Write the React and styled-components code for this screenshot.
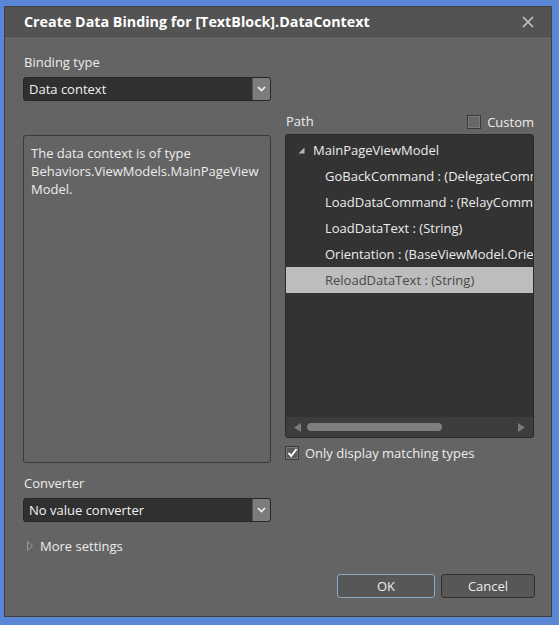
import React from "react";
import styled, { createGlobalStyle } from "styled-components";

const Global = createGlobalStyle`
  html, body { margin: 0; padding: 0; }
  body {
    background: #5b86d5;
    font-family: "Open Sans", "Noto Sans", sans-serif;
    font-size: 13px;
    color: #ececec;
    height: 625px;
    overflow: hidden;
  }
  #root { padding: 6px 7px 8px 4px; }
`;

const Window = styled.div`
  width: 548px;
  height: 611px;
  box-sizing: border-box;
  border: 1px solid #404040;
  background: #646464;
  display: flex;
  flex-direction: column;
`;

const TitleBar = styled.div`
  height: 30px;
  flex: none;
  background: #535353;
  border-bottom: 1px solid #4c4c4c;
  display: flex;
  align-items: center;
  justify-content: space-between;
  padding: 0 16px 0 19px;
  box-sizing: border-box;
`;

const Title = styled.div`
  font-weight: 700;
  font-size: 14.3px;
  color: #ffffff;
`;

const CloseBtn = styled.div`
  width: 14px;
  height: 14px;
  display: flex;
  align-items: center;
  justify-content: center;
`;

const Content = styled.div`
  flex: 1;
  padding: 16px 16px 18px 18px;
  display: flex;
  flex-direction: column;
`;

const Grid = styled.div`
  display: grid;
  grid-template-columns: 248px 249px;
  column-gap: 14px;
`;

const Field = styled.div`
  display: flex;
  flex-direction: column;
  gap: 5px;
`;

const Label = styled.div`
  height: 19px;
  line-height: 19px;
  padding-left: 1px;
  color: #ececec;
`;

const Select = styled.div`
  height: 24px;
  box-sizing: border-box;
  border: 1px solid #262626;
  border-radius: 3px;
  background: #303030;
  display: flex;
  align-items: stretch;
  overflow: hidden;
`;

const SelectText = styled.div`
  flex: 1;
  padding-left: 5px;
  line-height: 22px;
  color: #f0f0f0;
`;

const SelectArrow = styled.div`
  width: 17px;
  background: #7c7c7c;
  display: flex;
  align-items: center;
  justify-content: center;
  border-left: 1px solid #555;
`;

const PathHeader = styled.div`
  margin-top: 11px;
  height: 19px;
  display: flex;
  align-items: center;
  justify-content: space-between;
  grid-column: 2;
`;

const CheckWrap = styled.div`
  display: flex;
  align-items: center;
  gap: 6px;
`;

const Box = styled.div`
  width: 14px;
  height: 14px;
  box-sizing: border-box;
  border: 1px solid #3a3a3a;
  background: ${(p) => (p.checked ? "#5a5a5a" : "#676767")};
  display: flex;
  align-items: center;
  justify-content: center;
  box-shadow: inset 0 0 0 1px #7a7a7a;
`;

const Desc = styled.div`
  margin-top: 4px;
  height: 328px;
  box-sizing: border-box;
  border: 1px solid #3a3a3a;
  border-radius: 3px;
  padding: 8px 7px;
  line-height: 18px;
  color: #ececec;
`;

const RightCol = styled.div`
  margin-top: 3px;
  display: flex;
  flex-direction: column;
`;

const Tree = styled.div`
  height: 304px;
  box-sizing: border-box;
  border: 1px solid #2a2a2a;
  border-radius: 3px;
  background: #333333;
  display: flex;
  flex-direction: column;
  overflow: hidden;
`;

const TreeBody = styled.div`
  flex: 1;
  padding-top: 2px;
  overflow: hidden;
`;

const Row = styled.div`
  height: 26px;
  display: flex;
  align-items: center;
  padding-left: ${(p) => p.indent}px;
  white-space: nowrap;
  overflow: hidden;
  background: ${(p) => (p.selected ? "#bdbdbd" : "transparent")};
  color: ${(p) => (p.selected ? "#484848" : "#ececec")};
`;

const Expander = styled.span`
  width: 15px;
  display: inline-flex;
  align-items: center;
`;

const HScroll = styled.div`
  height: 20px;
  flex: none;
  background: #3d3d3d;
  display: flex;
  align-items: center;
  padding: 0 8px;
  gap: 6px;
`;

const Track = styled.div`
  flex: 1;
  height: 8px;
`;

const Thumb = styled.div`
  height: 8px;
  border-radius: 4px;
  background: #7f7f7f;
`;

const CheckRow = styled.div`
  margin-top: 7px;
  height: 16px;
  display: flex;
  align-items: center;
  gap: 6px;
`;

const ConverterField = styled(Field)`
  margin-top: 11px;
`;

const More = styled.div`
  margin-top: 14px;
  height: 20px;
  display: flex;
  align-items: center;
  gap: 7px;
  padding-left: 4px;
`;

const Footer = styled.div`
  margin-top: auto;
  display: flex;
  justify-content: flex-end;
  gap: 6px;
`;

const Button = styled.div`
  width: ${(p) => p.w}px;
  height: 24px;
  box-sizing: border-box;
  border: 1px solid ${(p) => (p.primary ? "#8aa9c6" : "#2f2f2f")};
  border-radius: 3px;
  background: #575757;
  display: flex;
  align-items: center;
  justify-content: center;
  color: #eeeeee;
`;

const Chevron = () => (
  <svg width="9" height="6" viewBox="0 0 9 6">
    <path d="M1 1 L4.5 4.5 L8 1" fill="none" stroke="#f2f2f2" strokeWidth="1.6" />
  </svg>
);

const Dropdown = ({ value }) => (
  <Select>
    <SelectText>{value}</SelectText>
    <SelectArrow>
      <Chevron />
    </SelectArrow>
  </Select>
);

const rows = [
  "GoBackCommand : (DelegateCommand)",
  "LoadDataCommand : (RelayCommand)",
  "LoadDataText : (String)",
  "Orientation : (BaseViewModel.Orientation)",
  "ReloadDataText : (String)",
];

export default function App() {
  return (
    <>
      <Global />
      <Window>
        <TitleBar>
          <Title>Create Data Binding for [TextBlock].DataContext</Title>
          <CloseBtn>
            <svg width="12" height="12" viewBox="0 0 12 12">
              <path d="M1 1 L11 11 M11 1 L1 11" stroke="#c8c8c8" strokeWidth="1.6" />
            </svg>
          </CloseBtn>
        </TitleBar>
        <Content>
          <Grid>
            <Field>
              <Label>Binding type</Label>
              <Dropdown value="Data context" />
            </Field>
            <div />
            <div />
            <PathHeader>
              <Label>Path</Label>
              <CheckWrap>
                <Box />
                <span>Custom</span>
              </CheckWrap>
            </PathHeader>
            <Desc>
              The data context is of type
              <br />
              Behaviors.ViewModels.MainPageView
              <br />
              Model.
            </Desc>
            <RightCol>
              <Tree>
                <TreeBody>
                  <Row indent={12}>
                    <Expander>
                      <svg width="7" height="7" viewBox="0 0 7 7">
                        <path d="M6.5 0.5 L6.5 6.5 L0.5 6.5 Z" fill="#b5b5b5" />
                      </svg>
                    </Expander>
                    MainPageViewModel
                  </Row>
                  {rows.map((r, i) => (
                    <Row key={r} indent={39} selected={i === 4}>
                      {r}
                    </Row>
                  ))}
                </TreeBody>
                <HScroll>
                  <svg width="7" height="9" viewBox="0 0 7 9">
                    <path d="M7 0 L0 4.5 L7 9 Z" fill="#7a7a7a" />
                  </svg>
                  <Track>
                    <Thumb style={{ width: "66%" }} />
                  </Track>
                  <svg width="7" height="9" viewBox="0 0 7 9">
                    <path d="M0 0 L7 4.5 L0 9 Z" fill="#7a7a7a" />
                  </svg>
                </HScroll>
              </Tree>
              <CheckRow>
                <Box checked>
                  <svg width="11" height="10" viewBox="0 0 11 10">
                    <path d="M1.5 5 L4.2 8 L9.5 1" fill="none" stroke="#ffffff" strokeWidth="2" />
                  </svg>
                </Box>
                <span>Only display matching types</span>
              </CheckRow>
            </RightCol>
            <ConverterField>
              <Label>Converter</Label>
              <Dropdown value="No value converter" />
            </ConverterField>
          </Grid>
          <More>
            <svg width="6" height="10" viewBox="0 0 6 10">
              <path d="M0.5 0.5 L5.5 5 L0.5 9.5 Z" fill="none" stroke="#9a9a9a" strokeWidth="1" />
            </svg>
            More settings
          </More>
          <Footer>
            <Button w={98} primary>OK</Button>
            <Button w={94}>Cancel</Button>
          </Footer>
        </Content>
      </Window>
    </>
  );
}
